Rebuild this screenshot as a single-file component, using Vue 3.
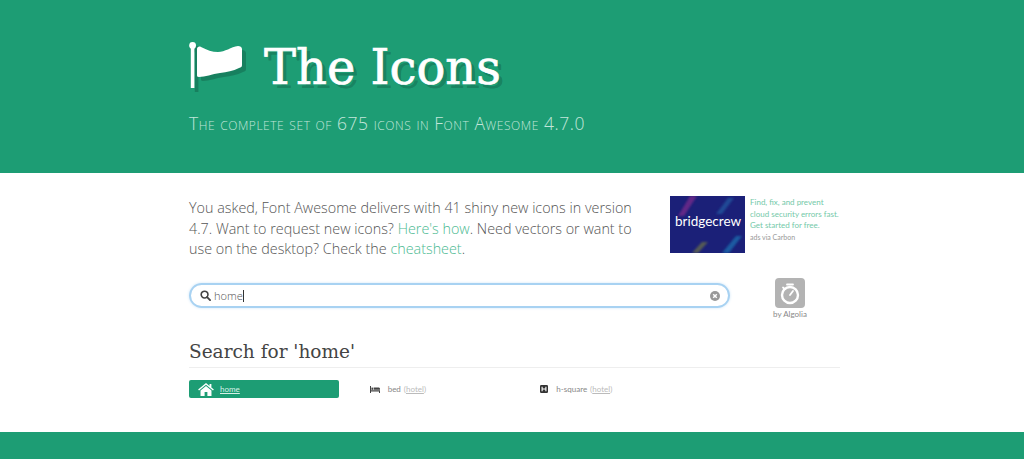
<template>
  <div class="page">
    <header class="hero">
      <div class="hero-inner">
        <h1 class="title">
          <svg class="flag" viewBox="0 0 54 46" width="54" height="46">
            <circle cx="3.6" cy="3.4" r="3.4" />
            <rect x="1.8" y="5" width="3.6" height="41" />
            <path d="M8 7C8 5 10 4 12 5c6 3 11 5 17 5 7 0 13-5 20-6 2 0 4 1 4 3v16c0 2-1 2-3 3-6 3-12 4-19 5-8 1-15 4-21 4-2 0-2-1-2-2z" />
          </svg>
          <span class="title-text">The Icons</span>
        </h1>
        <p class="subtitle">The complete set of 675 icons in Font Awesome 4.7.0</p>
      </div>
    </header>

    <main class="content">
      <section class="intro">
        <p class="lead">
          You asked, Font Awesome delivers with 41 shiny new icons in version
          4.7. Want to request new icons? <a href="#">Here's how</a>. Need vectors or want to
          use on the desktop? Check the <a href="#">cheatsheet</a>.
        </p>
        <div class="ad">
          <div class="ad-image">
            <svg viewBox="0 0 75 57" width="75" height="57">
              <defs>
                <filter id="soft"><feGaussianBlur stdDeviation="1.2" /></filter>
              </defs>
              <rect width="75" height="57" fill="#1b2078" />
              <g filter="url(#soft)" opacity="0.75">
                <path d="M8 20 20 0h7L14 20z" fill="#7a2a8c" />
                <path d="M46 18 58 2h6L52 18z" fill="#2158a0" />
                <path d="M22 57l10-11h6L28 57z" fill="#6b7048" />
                <path d="M52 57l14-17h6L59 57z" fill="#1a6fb0" />
              </g>
            </svg>
            <span class="ad-name">bridgecrew</span>
          </div>
          <div class="ad-copy">
            <a href="#">Find, fix, and prevent cloud security errors fast. Get started for free.</a>
            <span class="ad-via">ads via Carbon</span>
          </div>
        </div>
      </section>

      <section class="search-row">
        <div class="search-box">
          <svg class="search-icon" viewBox="0 0 13 13" width="11" height="11">
            <circle cx="5.4" cy="5.4" r="4" fill="none" stroke="#444" stroke-width="1.9" />
            <path d="M8.4 8.4l3.500 3.500" stroke="#444" stroke-width="2.200" stroke-linecap="round" />
          </svg>
          <span class="query">{{ query }}</span><span class="caret"></span>
          <svg class="clear-icon" viewBox="0 0 10 10" width="10" height="10">
            <circle cx="5" cy="5" r="5" fill="#999" />
            <path d="M3.200 3.200l3.600 3.600M6.800 3.200 3.200 6.800" stroke="#fff" stroke-width="1.500" />
          </svg>
        </div>
        <div class="algolia">
          <div class="algolia-badge">
            <svg viewBox="0 0 30 30" width="30" height="30">
              <circle cx="15" cy="17" r="8" fill="none" stroke="#fff" stroke-width="2.400" />
              <path d="M12 6.500h6M15 17l3-4" stroke="#fff" stroke-width="1.800" stroke-linecap="round" />
              <path d="M8 9.500l2 1.600" stroke="#fff" stroke-width="1.800" stroke-linecap="round" />
            </svg>
          </div>
          <span>by Algolia</span>
        </div>
      </section>

      <section class="results">
        <h2>Search for '{{ query }}'</h2>
        <div class="result-grid">
          <a v-for="item in results" :key="item.name" href="#" class="result" :class="{ active: item.active }">
            <svg v-if="item.name === 'home'" class="result-icon" viewBox="0 0 17 14" width="16" height="13">
              <path d="M8.500 0 0 7l1 1.200L8.500 2l7.500 6.200L17 7l-2.700-2.200V1h-2v2.100z" fill="#fff" />
              <path d="M8.500 3.200 2.600 8v6H7V9.600h3V14h4.400V8z" fill="#fff" />
            </svg>
            <svg v-else-if="item.name === 'bed'" class="result-icon" viewBox="0 0 10 7" width="10" height="7">
              <path d="M0 0h1v4.200h9V7H9V5.600H1V7H0z" fill="#444" />
              <rect x="1.400" y="1.600" width="1.900" height="2.200" fill="#444" />
              <path d="M3.800 1.600h4.700c.8 0 1.500.6 1.500 1.400v.8H3.800z" fill="#444" />
            </svg>
            <svg v-else class="result-icon" viewBox="0 0 8 8" width="8" height="8">
              <rect width="8" height="8" rx="1.200" fill="#333" />
              <path d="M2.100 1.800v4.400M5.900 1.800v4.400M2.100 4h3.800" stroke="#fff" stroke-width="1.100" fill="none" />
            </svg>
            <span class="result-name">{{ item.name }}</span>
            <span v-if="item.alias" class="alias">(<u>{{ item.alias }}</u>)</span>
          </a>
        </div>
      </section>
    </main>

    <footer class="footer"></footer>
  </div>
</template>

<script setup>
import { ref } from 'vue'

const query = ref('home')
const results = [
  { name: 'home', active: true },
  { name: 'bed', alias: 'hotel' },
  { name: 'h-square', alias: 'hotel' }
]
</script>

<style>
html, body {
  margin: 0;
  overflow: hidden;
}
</style>

<style scoped>
.page {
  height: 459px;
  display: flex;
  flex-direction: column;
  background: #fff;
  font-family: "Open Sans", Lato, sans-serif;
  color: #777;
}
.hero {
  height: 173px;
  flex: none;
  background: #1d9d74;
}
.hero-inner {
  padding: 42px 0 0 189px;
}
.title {
  margin: 0;
  display: flex;
  align-items: flex-start;
  gap: 21px;
  height: 46px;
  font-family: "DejaVu Serif", serif;
  font-weight: 400;
  font-size: 48px;
  line-height: 50px;
  color: #fff;
  -webkit-text-stroke: 0.7px #fff;
  text-shadow: 4px 4px 0 rgba(0, 0, 0, 0.18);
}
.flag {
  flex: none;
  fill: #fff;
  filter: drop-shadow(4px 4px 0 rgba(0, 0, 0, 0.18));
}
.subtitle {
  margin: 23px 0 0;
  font-size: 17.5px;
  letter-spacing: 0.55px;
  font-weight: 300;
  font-variant: small-caps;
  line-height: 24px;
  color: #c2e6da;
}
.content {
  width: 651px;
  margin-left: 189px;
  flex: 1;
}
.intro {
  display: flex;
  justify-content: space-between;
  padding-top: 23px;
}
.lead {
  margin: 0;
  padding-top: 2px;
  width: 450px;
  font-size: 14.35px;
  font-weight: 300;
  line-height: 20.5px;
  color: #555;
}
.lead a {
  color: #4cba92;
  text-decoration: none;
}
.ad {
  display: flex;
  width: 170px;
  gap: 5px;
}
.ad-image {
  position: relative;
  width: 75px;
  height: 57px;
  flex: none;
}
.ad-name {
  position: absolute;
  left: 5px;
  top: 17px;
  font-family: Lato, sans-serif;
  font-size: 13.5px;
  color: #fff;
}
.ad-copy {
  font-family: Lato, sans-serif;
  font-size: 8px;
  line-height: 11.5px;
  padding-top: 1px;
}
.ad-copy a {
  color: #74c9a9;
  text-decoration: none;
}
.ad-via {
  display: block;
  font-size: 7px;
  color: #999;
}
.search-row {
  display: flex;
  margin-top: 18.5px;
}
.search-box {
  width: 528px;
  height: 21px;
  margin-top: 5px;
  display: flex;
  align-items: center;
  padding: 0 0 0 9px;
  border: 2px solid #a8d2f2;
  border-radius: 13px;
  box-shadow: 0 0 3px #cfe6f8;
  font-size: 11px;
}
.search-icon {
  margin-right: 3px;
}
.query {
  font-weight: 300;
  color: #555;
}
.caret {
  width: 1px;
  height: 12px;
  background: #333;
}
.clear-icon {
  margin-left: auto;
  margin-right: 8px;
}
.algolia {
  margin-left: 42px;
  width: 36px;
  display: flex;
  flex-direction: column;
  align-items: center;
  font-family: Lato, sans-serif;
  font-size: 8px;
  color: #888;
  white-space: nowrap;
}
.algolia-badge {
  width: 30px;
  height: 30px;
  margin-bottom: 1px;
  background: #b3b3b3;
  border-radius: 4px;
}
.results h2 {
  margin: 21px 0 0;
  padding-bottom: 3px;
  border-bottom: 1px solid #eee;
  font-family: "DejaVu Serif", serif;
  font-weight: 400;
  font-size: 18.500px;
  line-height: 24px;
  color: #444;
}
.result-grid {
  display: grid;
  grid-template-columns: repeat(3, 170.67px);
  margin-top: 12px;
}
.result {
  height: 18px;
  margin-left: 10px;
  display: flex;
  align-items: center;
  gap: 8px;
  font-family: Lato, sans-serif;
  font-size: 8px;
  color: #888;
  text-decoration: none;
  border-radius: 2px;
}
.result-icon {
  flex: none;
}
.result .alias {
  margin-left: -5px;
  color: #bbb;
}
.result.active {
  margin-left: 0;
  background: #1d9d74;
  padding-left: 9px;
  width: 141px;
  gap: 6px;
}
.result.active .result-name {
  color: #d8f0e7;
  text-decoration: underline;
}
.footer {
  height: 27px;
  flex: none;
  background: #1d9d74;
}
</style>
